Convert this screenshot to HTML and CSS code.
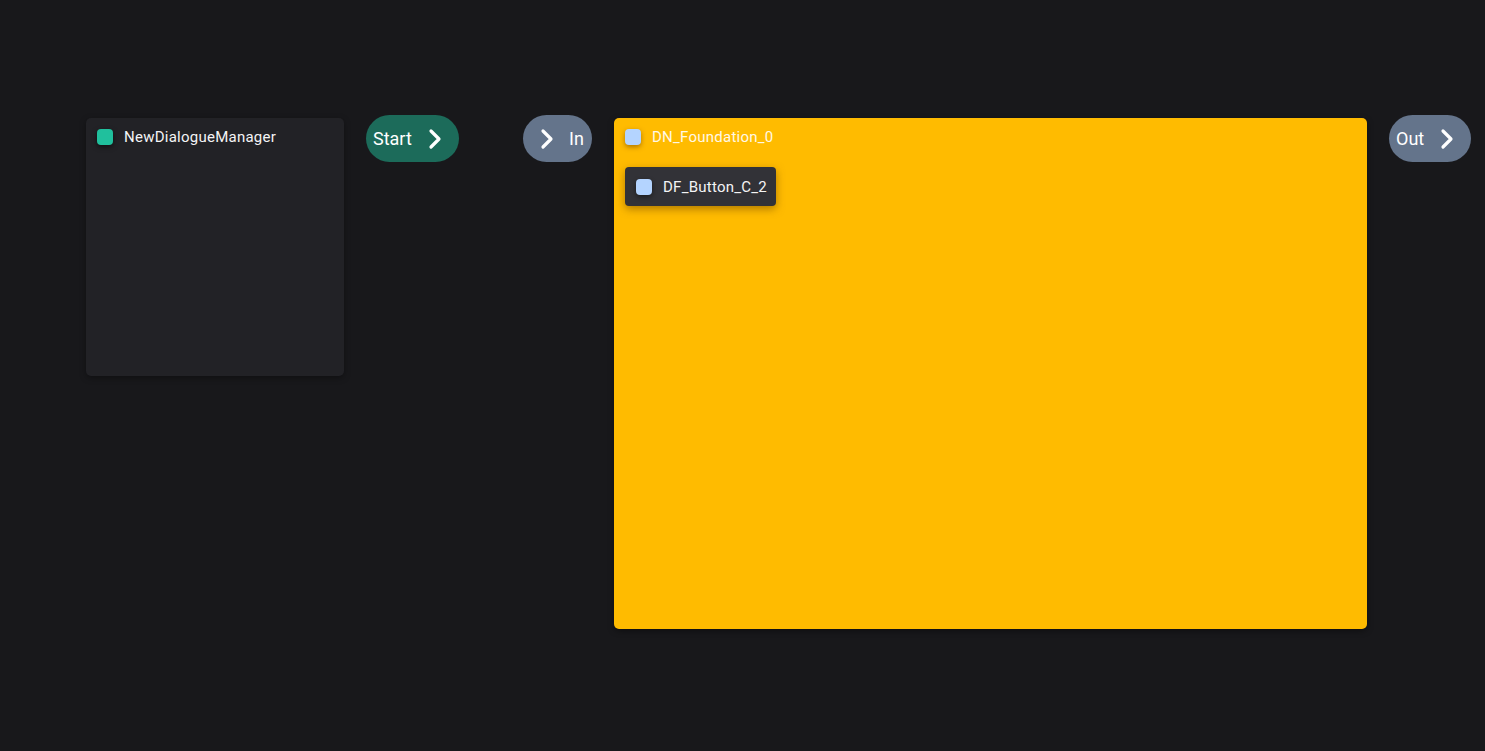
FILE: index.html
```html
<!DOCTYPE html>
<html>
<head>
<meta charset="utf-8">
<link rel="stylesheet" href="styles.css">
</head>
<body>
<div class="canvas">
  <div class="node node-manager">
    <div class="node-head"><span class="dot dot-green"></span><span class="label">NewDialogueManager</span></div>
  </div>

  <div class="pill pill-start">
    <span class="pill-text">Start</span>
    <svg class="chev" viewBox="0 0 16 22" width="16" height="22"><path d="M4 3 L12 11 L4 19" fill="none" stroke="#fff" stroke-width="3.2" stroke-linecap="round" stroke-linejoin="round"/></svg>
  </div>

  <div class="pill pill-in">
    <svg class="chev" viewBox="0 0 16 22" width="16" height="22"><path d="M4 3 L12 11 L4 19" fill="none" stroke="#fff" stroke-width="3.2" stroke-linecap="round" stroke-linejoin="round"/></svg>
    <span class="pill-text">In</span>
  </div>

  <div class="node node-foundation">
    <div class="node-head"><span class="dot dot-blue dot-shadow"></span><span class="label">DN_Foundation_0</span></div>
    <div class="child">
      <span class="dot dot-blue"></span><span class="label">DF_Button_C_2</span>
    </div>
  </div>

  <div class="pill pill-out">
    <span class="pill-text">Out</span>
    <svg class="chev" viewBox="0 0 16 22" width="16" height="22"><path d="M4 3 L12 11 L4 19" fill="none" stroke="#fff" stroke-width="3.2" stroke-linecap="round" stroke-linejoin="round"/></svg>
  </div>
</div>
</body>
</html>
```

FILE: styles.css
```css
html, body {
  margin: 0;
  padding: 0;
  background: #18181b;
  font-family: Roboto, "Liberation Sans", sans-serif;
  color: #f4f4f5;
}
.canvas {
  position: relative;
  width: 1485px;
  height: 751px;
  overflow: hidden;
}
.node {
  position: absolute;
  border-radius: 5px;
  box-sizing: border-box;
}
.node-manager {
  left: 86px;
  top: 118px;
  width: 258px;
  height: 258px;
  background: #222226;
  box-shadow: 0 2px 6px rgba(0,0,0,0.35);
}
.node-foundation {
  left: 614px;
  top: 118px;
  width: 753px;
  height: 511px;
  background: #ffbb00;
  box-shadow: 0 2px 6px rgba(0,0,0,0.4);
}
.node-head {
  display: flex;
  align-items: center;
  gap: 11px;
  padding: 11px 11px 0 11px;
  height: 16px;
}
.dot {
  width: 16px;
  height: 16px;
  border-radius: 4px;
  flex: none;
}
.dot-green {
  background: #20c09d;
  box-shadow: 0 2px 5px rgba(0,0,0,0.5);
}
.dot-blue {
  background: #b4d4ff;
  box-shadow: 0 2px 5px rgba(0,0,0,0.45);
}
.dot-shadow {
  box-shadow: 0 2px 5px rgba(120,70,0,0.6);
}
.label {
  font-size: 15px;
  letter-spacing: 0.25px;
  line-height: 16px;
  color: #f4f4f5;
  white-space: nowrap;
}
.node-foundation .node-head .label {
  color: #fff8e6;
}
.child {
  display: inline-flex;
  align-items: center;
  gap: 11px;
  margin: 22px 0 0 11px;
  height: 39px;
  padding: 0 9px 0 11px;
  background: #323237;
  border-radius: 4px;
  box-shadow: 0 3px 8px rgba(110,70,0,0.55);
}
.pill {
  position: absolute;
  top: 115px;
  height: 47px;
  border-radius: 24px;
  display: flex;
  align-items: center;
  box-sizing: border-box;
}
.pill-text {
  font-size: 18px;
  color: #ffffff;
}
.chev {
  display: block;
}
.pill-start {
  left: 366px;
  width: 93px;
  background: #1c6b5a;
  padding-left: 7px;
  gap: 15px;
}
.pill-in {
  left: 523px;
  width: 69px;
  background: #64748b;
  padding-left: 16px;
  gap: 14px;
}
.pill-out {
  left: 1389px;
  width: 82px;
  background: #64748b;
  padding-left: 7px;
  gap: 15px;
}
```
